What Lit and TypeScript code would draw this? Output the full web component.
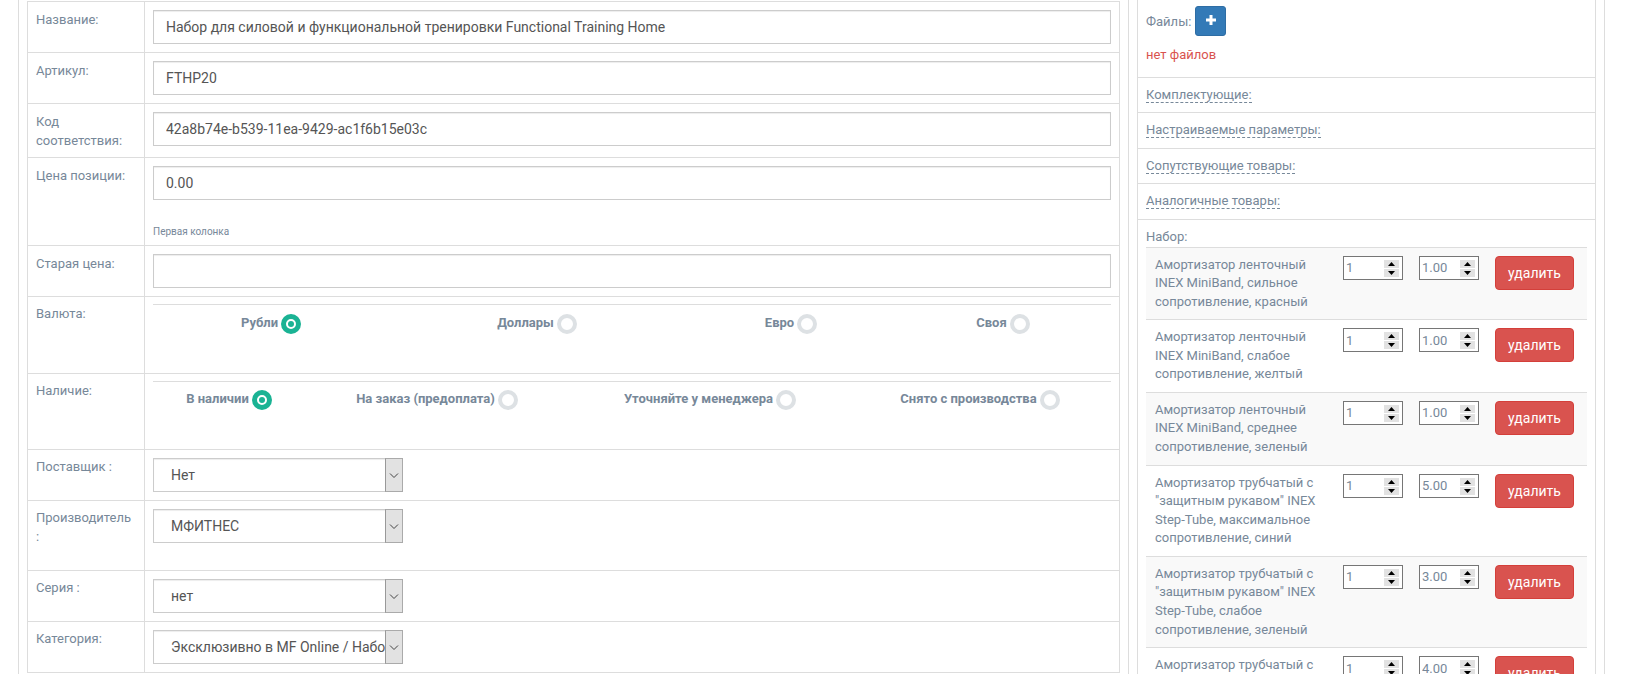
import { LitElement, html, css } from "lit";
import { customElement } from "lit/decorators.js";

const currency = [
  { t: "Рубли", on: true },
  { t: "Доллары", on: false },
  { t: "Евро", on: false },
  { t: "Своя", on: false },
];
const stock = [
  { t: "В наличии", on: true },
  { t: "На заказ (предоплата)", on: false },
  { t: "Уточняйте у менеджера", on: false },
  { t: "Снято с производства", on: false },
];
const items = [
  { n: "Амортизатор ленточный INEX MiniBand, сильное сопротивление, красный", q: "1", p: "1.00" },
  { n: "Амортизатор ленточный INEX MiniBand, слабое сопротивление, желтый", q: "1", p: "1.00" },
  { n: "Амортизатор ленточный INEX MiniBand, среднее сопротивление, зеленый", q: "1", p: "1.00" },
  { n: 'Амортизатор трубчатый с "защитным рукавом" INEX Step-Tube, максимальное сопротивление, синий', q: "1", p: "5.00" },
  { n: 'Амортизатор трубчатый с "защитным рукавом" INEX Step-Tube, слабое сопротивление, зеленый', q: "1", p: "3.00" },
  { n: "Амортизатор трубчатый с", q: "1", p: "4.00" },
];

@customElement("app-root")
export class AppRoot extends LitElement {
  static styles = css`
    :host {
      display: block;
      height: 674px;
      overflow: hidden;
      background: #fff;
      font-family: Roboto, "Liberation Sans", sans-serif;
      font-size: 13px;
      line-height: 18.57px;
      color: #778899;
    }
    * { box-sizing: border-box; }
    .page { display: flex; margin-left: 18px; width: 1587px; height: 900px; }
    .left {
      width: 1111px;
      flex: none;
      padding: 1px 8px 0;
      border-left: 1px solid #ddd;
      border-right: 1px solid #ddd;
    }
    .table { border: 1px solid #ddd; border-bottom: 0; }
    .row { display: flex; border-bottom: 1px solid #ddd; }
    .name { width: 117px; flex: none; padding: 9px 8px 7px; border-right: 1px solid #ddd; }
    .name.low { padding: 8px; }
    .val { flex: 1; min-width: 0; padding: 8px; }
    .val.opts { padding-top: 7px; }
    .text {
      display: block;
      width: 100%;
      height: 34px;
      padding: 6px 12px;
      border: 1px solid #ccc;
      border-radius: 0;
      box-shadow: inset 0 1px 1px rgba(0, 0, 0, 0.075);
      font: 14px Roboto, "Liberation Sans", sans-serif;
      color: #555;
      outline: 0;
    }
    .help { font-size: 10px; line-height: 14px; margin: 25px 0 -2px; }
    .radios { display: grid; border-top: 1px solid #ddd; }
    .cur { grid-template-columns: 236px 296px 212px 212px; height: 61px; padding-top: 9px; }
    .stock { grid-template-columns: 152px 264px 282px 258px; height: 60px; padding-top: 8px; }
    .opt { display: flex; justify-content: center; align-items: flex-start; gap: 3px; font-weight: 700; }
    .ring { width: 20px; height: 20px; border-radius: 50%; border: 4px solid #dde1e4; background: #fff; }
    .ring.on { border: 5px solid #1ab394; display: flex; align-items: center; justify-content: center; }
    .ring.on::after { content: ""; width: 6px; height: 6px; border-radius: 50%; background: #1ab394; }
    .sel { position: relative; width: 250px; height: 34px; }
    .sel select {
      appearance: none;
      display: block;
      width: 100%;
      height: 100%;
      padding: 0 17px 0 17px;
      border: 1px solid #ccc;
      border-radius: 0;
      background: #fff;
      box-shadow: inset 0 1px 1px rgba(0, 0, 0, 0.075);
      font: 14px Roboto, "Liberation Sans", sans-serif;
      color: #555;
      outline: 0;
    }
    .arrow {
      position: absolute;
      top: 0;
      right: 0;
      bottom: 0;
      width: 18px;
      display: flex;
      align-items: center;
      justify-content: center;
      background: #e2e2e2;
      border: 1px solid #aaa;
      border-left-color: #999;
    }
    .tall { padding-bottom: 27px; }

    .right { flex: 1; min-width: 0; padding: 0 8px; border-right: 1px solid #ddd; }
    .rtable { border-left: 1px solid #ddd; border-right: 1px solid #ddd; }
    .rrow { padding: 8px; border-bottom: 1px solid #ddd; }
    .files { height: 77.7px; padding-top: 6px; }
    .fhead { display: flex; align-items: center; gap: 4px; }
    .fhead span { position: relative; top: 1px; }
    .plus {
      width: 31px;
      height: 30px;
      display: flex;
      align-items: center;
      justify-content: center;
      padding: 0 0 2px;
      background: #337ab7;
      border: 1px solid #2e6da4;
      border-radius: 3px;
    }
    .none { color: #d9534f; margin-top: 10px; }
    .dash { border-bottom: 1px dashed #778899; }
    .set { border-bottom: 0; padding-bottom: 0; }
    .irow { display: flex; align-items: flex-start; padding: 8px 12px 8px 9px; border-top: 1px solid #ddd; }
    .irow.odd { background: #f9f9f9; }
    .iname { width: 172px; flex: none; margin-right: 16px; }
    .num {
      position: relative;
      width: 60px;
      height: 24px;
      flex: none;
      margin-right: 16px;
      background: #fff;
      border: 1px solid #767676;
    }
    .num input {
      display: block;
      width: 100%;
      height: 100%;
      padding: 0 18px 0 2px;
      border: 0;
      background: transparent;
      font: 13px Roboto, "Liberation Sans", sans-serif;
      color: #778899;
      outline: 0;
    }
    .spin {
      position: absolute;
      right: 3px;
      top: 3px;
      width: 15px;
      height: 17px;
      display: flex;
      flex-direction: column;
      gap: 1px;
    }
    .spin span {
      flex: 1;
      background: #e2e2e2;
      display: flex;
      align-items: center;
      justify-content: center;
    }
    .del {
      width: 79px;
      height: 34px;
      flex: none;
      padding: 0;
      background: #d9534f;
      border: 1px solid #d43f3a;
      border-radius: 4px;
      color: #fff;
      font: 14px Roboto, "Liberation Sans", sans-serif;
    }
  `;

  private field(name: string, value: string, help = "") {
    return html`<div class="row">
      <div class="name">${name}</div>
      <div class="val">
        <input class="text" type="text" .value=${value} />
        ${help ? html`<div class="help">${help}</div>` : ""}
      </div>
    </div>`;
  }

  private radios(name: string, cls: string, opts: { t: string; on: boolean }[]) {
    return html`<div class="row">
      <div class="name low">${name}</div>
      <div class="val opts">
        <div class="radios ${cls}">
          ${opts.map(
            (o) => html`<div class="opt"><span>${o.t}</span><span class="ring ${o.on ? "on" : ""}"></span></div>`
          )}
        </div>
      </div>
    </div>`;
  }

  private select(name: string, value: string, tall = false) {
    return html`<div class="row">
      <div class="name low">${name}</div>
      <div class="val ${tall ? "tall" : ""}">
        <div class="sel">
          <select><option>${value}</option></select>
          <span class="arrow">
            <svg width="10" height="7" viewBox="0 0 10 7"><path d="M1 1.500l4 4 4-4" fill="none" stroke="#444" stroke-width="1" /></svg>
          </span>
        </div>
      </div>
    </div>`;
  }

  private num(v: string) {
    return html`<div class="num">
      <input type="text" .value=${v} />
      <div class="spin">
        <span><svg width="7" height="4" viewBox="0 0 7 4"><path d="M3.5 0L7 4H0z" fill="#000" /></svg></span>
        <span><svg width="7" height="4" viewBox="0 0 7 4"><path d="M0 0h7L3.5 4z" fill="#000" /></svg></span>
      </div>
    </div>`;
  }

  render() {
    return html`<div class="page">
      <div class="left">
        <div class="table">
          ${this.field("Название:", "Набор для силовой и функциональной тренировки Functional Training Home")}
          ${this.field("Артикул:", "FTHP20")}
          ${this.field("Код соответствия:", "42a8b74e-b539-11ea-9429-ac1f6b15e03c")}
          ${this.field("Цена позиции:", "0.00", "Первая колонка")}
          ${this.field("Старая цена:", "")}
          ${this.radios("Валюта:", "cur", currency)}
          ${this.radios("Наличие:", "stock", stock)}
          ${this.select("Поставщик :", "Нет")}
          ${this.select("Производитель :", "МФИТНЕС", true)}
          ${this.select("Серия :", "нет")}
          ${this.select("Категория:", "Эксклюзивно в MF Online / Наборы")}
        </div>
      </div>
      <div class="right">
        <div class="rtable">
          <div class="rrow files">
            <div class="fhead">
              <span>Файлы:</span>
              <button class="plus" aria-label="Добавить">
                <svg width="12" height="12" viewBox="0 0 12 12"><path d="M4.5 1h3v3.5H11v3H7.500V11h-3V7.500H1v-3h3.500z" fill="#fff" /></svg>
              </button>
            </div>
            <div class="none">нет файлов</div>
          </div>
          <div class="rrow"><span class="dash">Комплектующие:</span></div>
          <div class="rrow"><span class="dash">Настраиваемые параметры:</span></div>
          <div class="rrow"><span class="dash">Сопутствующие товары:</span></div>
          <div class="rrow"><span class="dash">Аналогичные товары:</span></div>
          <div class="rrow set">
            <div>Набор:</div>
            ${items.map(
              (it, i) => html`<div class="irow ${i % 2 === 0 ? "odd" : ""}">
                <div class="iname">${it.n}</div>
                ${this.num(it.q)} ${this.num(it.p)}
                <button class="del">удалить</button>
              </div>`
            )}
          </div>
        </div>
      </div>
    </div>`;
  }
}
